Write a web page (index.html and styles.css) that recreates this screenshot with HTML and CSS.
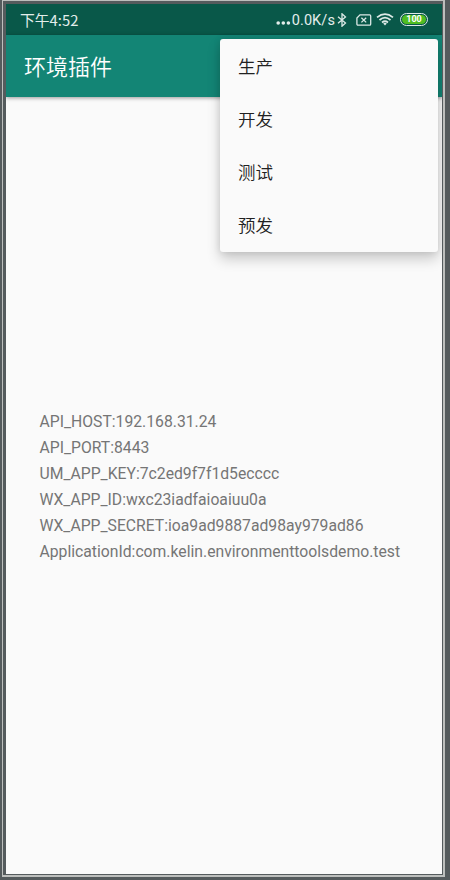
FILE: index.html
```html
<!DOCTYPE html>
<html lang="zh-CN">
<head>
<meta charset="utf-8">
<title>环境插件</title>
<link rel="stylesheet" href="styles.css">
</head>
<body>
<div class="bezel">
  <div class="screen">
    <header class="status">
      <span class="time">下午4:52</span>
      <div class="indicators">
        <svg class="dots" width="16" height="4" viewBox="0 0 16 4"><circle cx="2.2" cy="2" r="1.8"/><circle cx="7.3" cy="2" r="1.8"/><circle cx="12.4" cy="2" r="1.8"/></svg>
        <span class="speed">0.0K/s</span>
        <svg class="bluetooth line" width="10" height="14" viewBox="0 0 10 14"><path d="M1 3.8 8.5 10 5 13.2V.8L8.5 4 1 10.2"/></svg>
        <svg class="sim line" width="16" height="12" viewBox="0 0 16 12"><path d="M4 .8H13.6Q14.7.8 14.7 2V10Q14.7 11.2 13.6 11.2H2Q.9 11.2.9 10V4Z"/><path d="M5.4 3.8 10.2 8.4M10.2 3.8 5.4 8.4"/></svg>
        <svg class="wifi line" width="18" height="13" viewBox="0 0 18 13"><path d="M1 4.3Q9-2.2 17 4.3M3.5 7Q9 2.3 14.5 7M6 9.5Q9 7 12 9.5"/><path class="solid" d="M7.2 10.4Q9 9 10.8 10.4L9 12.4Z"/></svg>
        <span class="battery"><span class="charge">100</span></span>
      </div>
    </header>
    <div class="toolbar"><h1>环境插件</h1></div>
    <main class="details">
      <p>API_HOST:192.168.31.24</p>
      <p>API_PORT:8443</p>
      <p>UM_APP_KEY:7c2ed9f7f1d5ecccc</p>
      <p>WX_APP_ID:wxc23iadfaioaiuu0a</p>
      <p>WX_APP_SECRET:ioa9ad9887ad98ay979ad86</p>
      <p>ApplicationId:com.kelin.environmenttoolsdemo.test</p>
    </main>
    <ul class="menu">
      <li>生产</li>
      <li>开发</li>
      <li>测试</li>
      <li>预发</li>
    </ul>
  </div>
</div>
</body>
</html>
```
FILE: styles.css
```css
* { box-sizing: border-box; margin: 0; padding: 0; }
body {
  height: 880px;
  padding: 0 5px 3px 2px;
  background: #555b5d;
  font-family: Roboto, "Noto Sans CJK SC", sans-serif;
  overflow: hidden;
}
.bezel {
  height: 877px;
  padding: 3px 1px 1px 3px;
  border: solid #bdbfbd;
  border-width: 1px 2px 2px 1px;
  background: #555b5d;
}
.screen {
  position: relative;
  display: flex;
  flex-direction: column;
  height: 870px;
  background: #fafafa;
  overflow: hidden;
}
.status {
  display: flex;
  flex: none;
  align-items: center;
  justify-content: space-between;
  height: 31px;
  padding: 0 14px;
  background: #095849;
  color: #e3edeb;
}
.time {
  font: 14.8px/20px "Noto Sans CJK SC", sans-serif;
}
.indicators { display: flex; align-items: center; }
.dots { margin-top: 7px; fill: #e3edeb; }
.speed { padding-top: 2px; font-size: 14.5px; line-height: 20px; letter-spacing: .1px; }
.line { fill: none; stroke: #dce9e6; stroke-width: 1.3; }
.bluetooth { margin-left: 2px; }
.sim { margin-left: 9px; }
.wifi { margin-left: 4px; stroke-width: 1.7; }
.solid { fill: #dce9e6; stroke: none; }
.battery {
  width: 28px;
  height: 13px;
  margin-left: 6px;
  padding: 1px;
  border: 1px solid #dce9e6;
  border-radius: 7px;
}
.charge {
  display: block;
  height: 9px;
  border-radius: 5px;
  background: #50bd22;
  color: #fff;
  font-size: 9px;
  font-weight: 700;
  line-height: 9px;
  text-align: center;
}
.toolbar {
  display: flex;
  flex: none;
  align-items: center;
  height: 62px;
  padding: 0 0 2px 18px;
  background: #138575;
  box-shadow: 0 1px 4px rgba(0, 0, 0, .4);
}
h1 {
  color: #fff;
  font-family: "Noto Sans CJK SC", sans-serif;
  font-size: 22px;
  font-weight: 350;
  line-height: 32px;
}
.details {
  display: flex;
  flex: 1;
  flex-direction: column;
  justify-content: center;
  padding: 2px 0 0 33.5px;
  color: #757575;
  font-size: 15.73px;
  line-height: 26px;
}
.menu {
  position: absolute;
  top: 35px;
  right: 4.5px;
  width: 217.5px;
  height: 213px;
  border-radius: 3px;
  background: #fafafa;
  box-shadow: 0 7px 14px rgba(0, 0, 0, .2), 0 0 7px rgba(0, 0, 0, .1);
  color: #212121;
  font-size: 17.5px;
  font-weight: 350;
  list-style: none;
}
.menu li {
  height: 53px;
  padding-left: 18px;
  line-height: 56px;
}
```
